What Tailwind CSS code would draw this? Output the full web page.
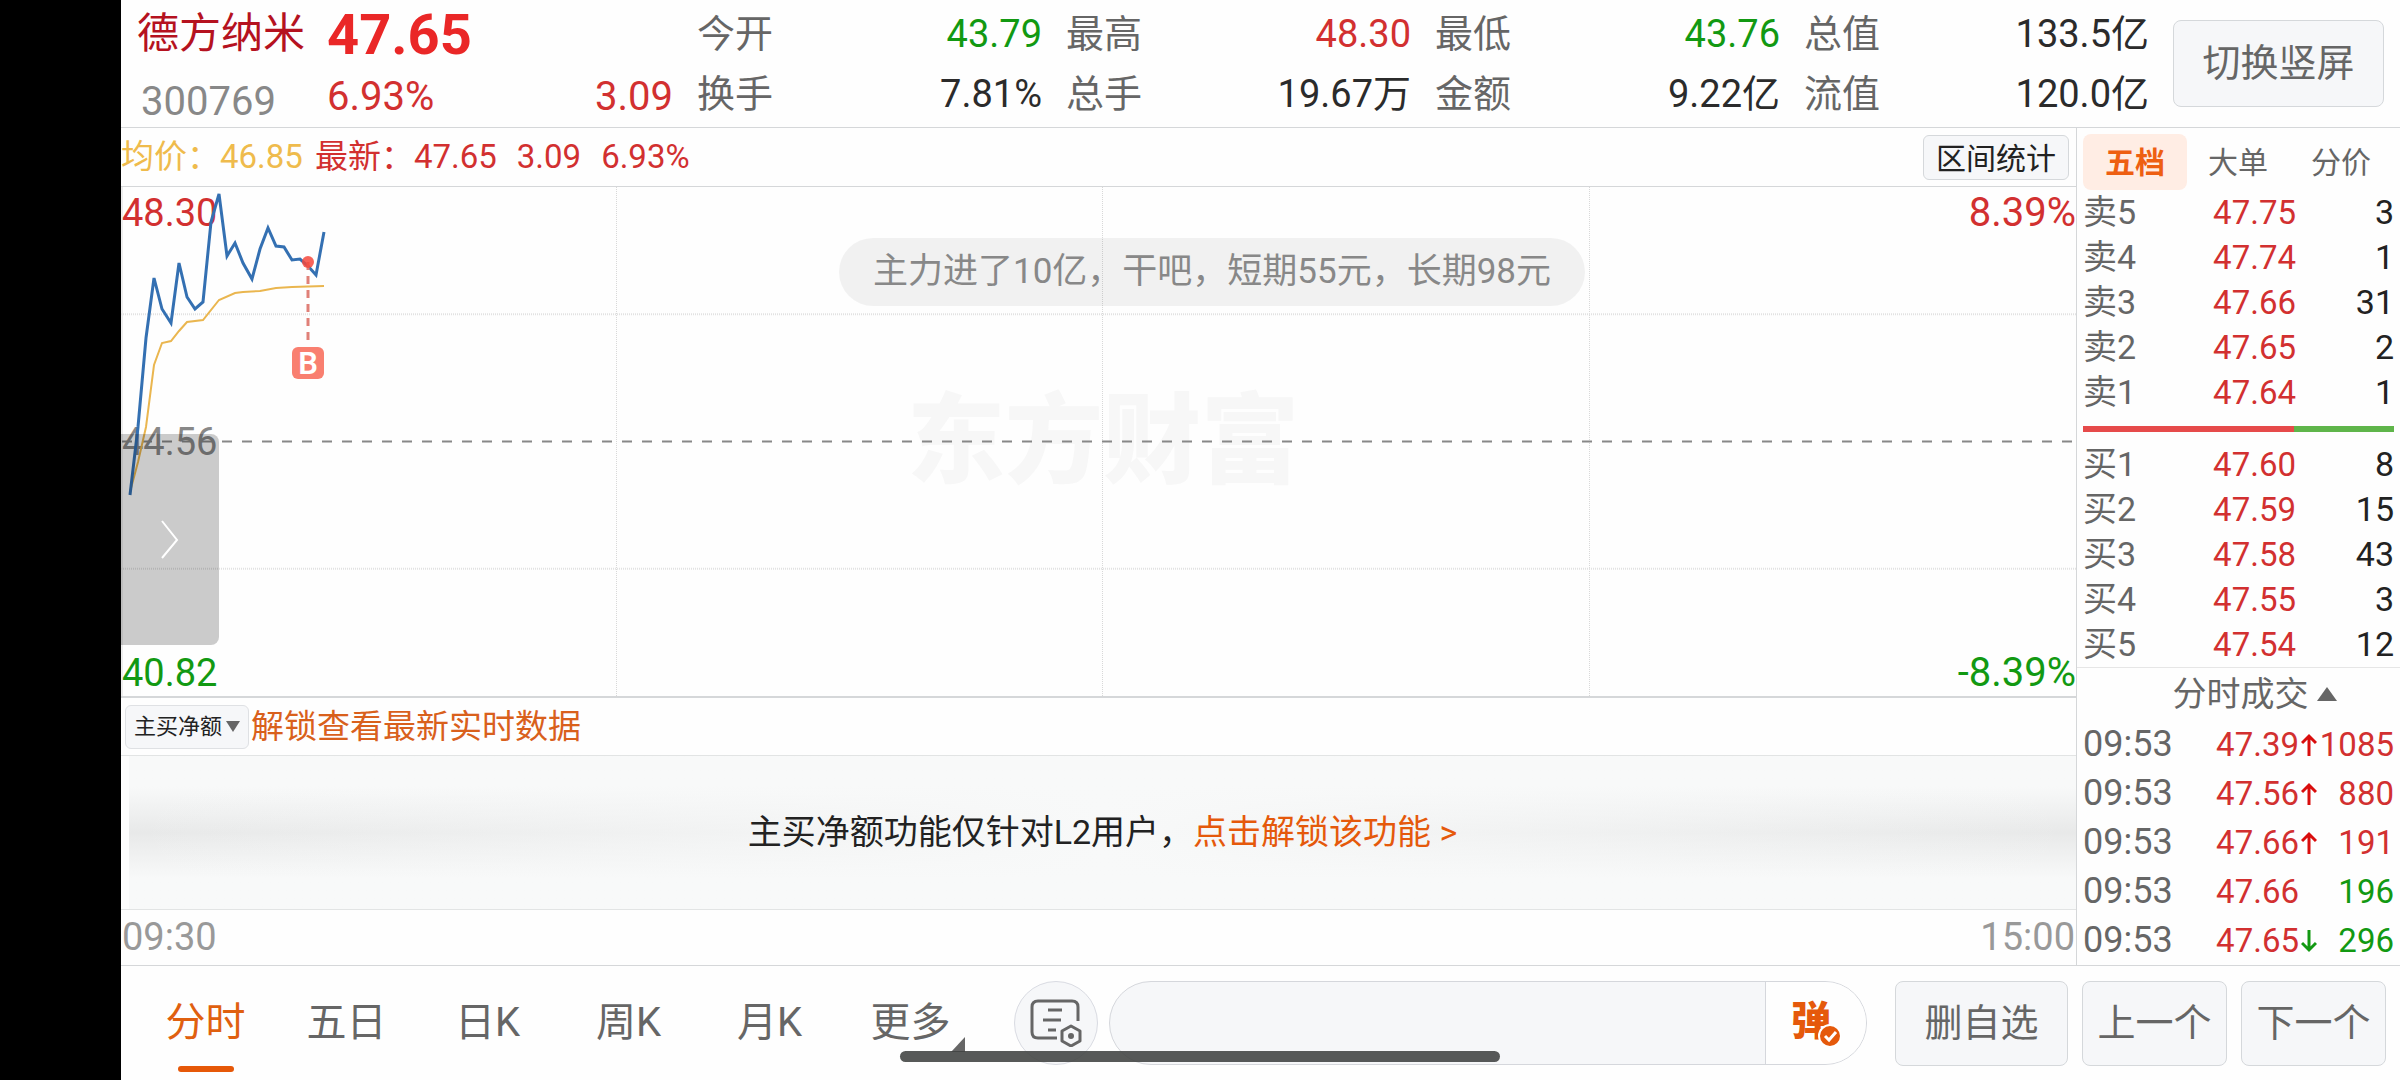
<!DOCTYPE html>
<html lang="zh-CN">
  <head>
    <meta charset="UTF-8" />
    <meta name="viewport" content="width=device-width, initial-scale=1.0" />
    <title>德方纳米 300769</title>
    <script src="https://cdn.jsdelivr.net/npm/@tailwindcss/browser@4"></script>
  </head>
  <body class="min-h-screen flex bg-black font-['Roboto','Noto_Sans_CJK_SC',sans-serif] text-[#666]">
    <div class="w-[121px] shrink-0"></div>

    <div class="relative flex-1 min-w-0 flex flex-col bg-[#fefefe]">

      <!-- Quote header -->
      <header class="flex h-32 border-b border-[#d5d7d9] pr-4">
        <div class="w-[206px] shrink-0 pl-4 pt-1">
          <h1 class="text-[42px] leading-[60px] text-[#b5121f] whitespace-nowrap">德方纳米</h1>
          <p class="text-[40px] leading-[76px] pl-1 text-[#888]">300769</p>
        </div>
        <div class="w-[346px] shrink-0">
          <p class="text-[56px] leading-[70px] font-bold text-[#ea2727]">47.65</p>
          <p class="flex justify-between text-[40px] leading-[54px] text-[#d23030]"><span>6.93%</span><span>3.09</span></p>
        </div>
        <dl class="flex-1 grid grid-cols-4 gap-x-6 content-start pl-6 pr-6 text-[38px] leading-[60px] pt-1 text-[#2b2b2b]">
          <div class="flex justify-between"><dt class="text-[#666]">今开</dt><dd class="text-[#129912]">43.79</dd></div>
          <div class="flex justify-between"><dt class="text-[#666]">最高</dt><dd class="text-[#d23030]">48.30</dd></div>
          <div class="flex justify-between"><dt class="text-[#666]">最低</dt><dd class="text-[#129912]">43.76</dd></div>
          <div class="flex justify-between"><dt class="text-[#666]">总值</dt><dd>133.5亿</dd></div>
          <div class="flex justify-between"><dt class="text-[#666]">换手</dt><dd>7.81%</dd></div>
          <div class="flex justify-between"><dt class="text-[#666]">总手</dt><dd>19.67万</dd></div>
          <div class="flex justify-between"><dt class="text-[#666]">金额</dt><dd>9.22亿</dd></div>
          <div class="flex justify-between"><dt class="text-[#666]">流值</dt><dd>120.0亿</dd></div>
        </dl>
        <button class="mt-5 h-[87px] w-[211px] shrink-0 rounded-lg border border-[#d5d8db] bg-[#f6f7f9] text-[38px]">切换竖屏</button>
      </header>

      <div class="flex-1 flex">
        <!-- Chart column -->
        <main class="flex-1 min-w-0 flex flex-col">
          <div class="flex items-center h-[59px] border-b border-[#d5d7d9] pr-[7px] text-[33px] text-[#d23030] whitespace-nowrap">
            <span class="text-[#efbb4c]">均价：46.85</span>
            <span class="ml-3">最新：47.65</span>
            <span class="ml-5">3.09</span>
            <span class="ml-5">6.93%</span>
            <button class="ml-auto h-[45px] w-[146px] rounded-md border border-[#d5d8db] bg-[#f6f7f9] text-[30px] text-[#222]">区间统计</button>
          </div>

          <!-- Intraday chart -->
          <div class="relative flex-1 min-h-[500px] border-b-2 border-[#d5d7d9] overflow-hidden">
            <p class="absolute left-[786px] top-1/2 -translate-y-1/2 text-[98px] leading-none font-black text-[#f7f7f7]">东方财富</p>
            <div class="absolute inset-y-0 left-[9px] right-0 grid grid-cols-4">
              <div class="border-r border-dotted border-[#d8d8d8]"></div>
              <div class="border-r border-dotted border-[#d8d8d8]"></div>
              <div class="border-r border-dotted border-[#d8d8d8]"></div>
            </div>
            <svg class="absolute inset-0 w-full h-full" fill="none">
              <line x1="1" y1="0" x2="1" y2="100%" stroke="#dcdcdc" />
              <line x1="0" y1="25%" x2="100%" y2="25%" stroke="#e2e2e2" stroke-width="2" stroke-dasharray="1 1" />
              <line x1="0" y1="75%" x2="100%" y2="75%" stroke="#e2e2e2" stroke-width="2" stroke-dasharray="1 1" />
              <line x1="1" y1="50%" x2="100%" y2="50%" stroke="#888" stroke-width="2" stroke-dasharray="10 10" />
            </svg>
            <span class="absolute left-px top-0 text-[38px] leading-[52px] text-[#d23030]">48.30</span>
            <span class="absolute left-px top-1/2 -translate-y-1/2 text-[38px] leading-[52px] text-[#888]">44.56</span>
            <span class="absolute left-px bottom-0 text-[38px] leading-[46px] text-[#129912]">40.82</span>
            <span class="absolute right-0 top-0 text-[40px] leading-[52px] text-[#d23030]">8.39%</span>
            <span class="absolute right-0 bottom-0 text-[40px] leading-[46px] text-[#129912]">-8.39%</span>
            <svg class="absolute left-0 top-0" width="260" height="400" viewBox="121 187 260 400" fill="none">
              <polyline stroke="#eab64f" stroke-width="2" points="130,492 138,462 146,427 154,365 162,343 171,341 179,331 187,322 203,320 219,300 235,293 243,292 260,291 276,288 292,287 324,286" />
              <polyline stroke="#3470b2" stroke-width="3" points="130,495 138,427 146,338 154,278 162,309 171,323 179,263 187,297 195,309 203,302 211,222 219,194 227,256 235,243 243,263 252,279 260,249 268,228 276,246 284,247 292,260 300,259 308,266 316,275 324,232" />
              <line x1="308" y1="262" x2="308" y2="340" stroke="#e08078" stroke-width="3" stroke-dasharray="8 6" />
              <circle cx="308" cy="262" r="6" fill="#f4483c" fill-opacity="0.85" />
              <rect x="292" y="347" width="32" height="32" rx="6" fill="#f97f70" />
              <text x="308" y="374" text-anchor="middle" font-size="31" font-weight="600" fill="#fff">B</text>
            </svg>
            <button aria-label="展开" class="absolute left-0 top-[247px] w-[98px] h-[211px] rounded-r-lg bg-black/20 flex items-center justify-center">
              <svg width="18" height="40" fill="none" stroke="#fff" stroke-width="2"><path d="M1 1 L16 20 L1 38" /></svg>
            </button>
            <p class="absolute left-[718px] top-[51px] h-[68px] px-[34px] rounded-full bg-black/5 text-[35px] leading-[68px] text-[#888] whitespace-nowrap">主力进了10亿，干吧，短期55元，长期98元</p>
          </div>

          <div class="flex items-center h-[58px] border-b border-[#e2e4e4] pl-1">
            <button class="flex items-center justify-between w-[124px] h-[44px] px-2 rounded-md border border-[#dfe1e4] bg-[#f6f7f9] text-[22px] text-[#222] whitespace-nowrap">主买净额
              <svg width="14" height="12"><path d="M0 0h14L7 11z" fill="#666" /></svg>
            </button>
            <a href="#" class="ml-0.5 text-[33px] text-[#d9601c]">解锁查看最新实时数据</a>
          </div>

          <div class="h-[154px] pl-2 border-b border-[#e2e4e4]">
            <p class="relative h-full flex items-center justify-center bg-linear-to-b from-[#f8f9f9] via-[#e8e9e9] to-[#f8f9f9] from-20% to-80% text-[34px] text-[#222]">
              <span class="absolute inset-0 bg-linear-to-r from-[#f8f9f9]/0 via-[#f8f9f9] to-[#f8f9f9]/0"></span>
              <span class="relative">主买净额功能仅针对L2用户，<a href="#" class="text-[#e5590b]">点击解锁该功能 &gt;</a></span>
            </p>
          </div>
          <div class="flex justify-between items-center h-[55px] px-px text-[38px] text-[#999]"><span>09:30</span><span>15:00</span></div>
        </main>

        <!-- Order book -->
        <aside class="w-[324px] shrink-0 border-l border-[#d5d7d9] text-[34px] text-[#222]">
          <div class="flex pt-1.5 pl-1.5 text-[30px] text-[#666]">
            <button class="w-[104px] h-14 rounded-lg bg-[#ffede4] font-bold text-[#ee5f12]">五档</button>
            <button class="w-[102px] h-14">大单</button>
            <button class="w-[104px] h-14">分价</button>
          </div>
          <table class="w-full table-fixed leading-[45px]">
            <tbody>
              <tr><td class="w-[78px] pl-1.5 text-[#666]">卖5</td><td class="w-[141px] text-right text-[33px] text-[#d23030]">47.75</td><td class="text-right pr-1.5">3</td></tr>
              <tr><td class="pl-1.5 text-[#666]">卖4</td><td class="text-right text-[33px] text-[#d23030]">47.74</td><td class="text-right pr-1.5">1</td></tr>
              <tr><td class="pl-1.5 text-[#666]">卖3</td><td class="text-right text-[33px] text-[#d23030]">47.66</td><td class="text-right pr-1.5">31</td></tr>
              <tr><td class="pl-1.5 text-[#666]">卖2</td><td class="text-right text-[33px] text-[#d23030]">47.65</td><td class="text-right pr-1.5">2</td></tr>
              <tr><td class="pl-1.5 text-[#666]">卖1</td><td class="text-right text-[33px] text-[#d23030]">47.64</td><td class="text-right pr-1.5">1</td></tr>
            </tbody>
          </table>
          <div class="mx-1.5 mt-[11px] mb-2.5 h-1.5 bg-linear-to-r from-[#e64a4a] from-68% to-[#5fb54a] to-68%"></div>
          <table class="w-full table-fixed leading-[45px]">
            <tbody>
              <tr><td class="w-[78px] pl-1.5 text-[#666]">买1</td><td class="w-[141px] text-right text-[33px] text-[#d23030]">47.60</td><td class="text-right pr-1.5">8</td></tr>
              <tr><td class="pl-1.5 text-[#666]">买2</td><td class="text-right text-[33px] text-[#d23030]">47.59</td><td class="text-right pr-1.5">15</td></tr>
              <tr><td class="pl-1.5 text-[#666]">买3</td><td class="text-right text-[33px] text-[#d23030]">47.58</td><td class="text-right pr-1.5">43</td></tr>
              <tr><td class="pl-1.5 text-[#666]">买4</td><td class="text-right text-[33px] text-[#d23030]">47.55</td><td class="text-right pr-1.5">3</td></tr>
              <tr><td class="pl-1.5 text-[#666]">买5</td><td class="text-right text-[33px] text-[#d23030]">47.54</td><td class="text-right pr-1.5">12</td></tr>
            </tbody>
          </table>
          <!-- Trades -->
          <button class="flex items-center justify-center gap-2 w-full h-[53px] pl-8 border-t border-[#e6e6e6] text-[#666]">分时成交
            <svg width="20" height="14"><path d="M10 0l10 14H0z" fill="#666" /></svg>
          </button>
          <table class="w-full table-fixed leading-[49px] text-[33px] text-[#d23030]">
            <tbody>
              <tr><td class="w-[102px] pl-1.5 text-[36px] text-[#666]">09:53</td><td class="w-[120px] text-right">47.39</td><td class="w-5"><svg class="mx-auto" width="16" height="24" fill="none" stroke="#d90d0d" stroke-width="3"><path d="M8 23V3M1 10l7-7 7 7" /></svg></td><td class="text-right pr-1.5">1085</td></tr>
              <tr><td class="pl-1.5 text-[36px] text-[#666]">09:53</td><td class="text-right">47.56</td><td><svg class="mx-auto" width="16" height="24" fill="none" stroke="#d90d0d" stroke-width="3"><path d="M8 23V3M1 10l7-7 7 7" /></svg></td><td class="text-right pr-1.5">880</td></tr>
              <tr><td class="pl-1.5 text-[36px] text-[#666]">09:53</td><td class="text-right">47.66</td><td><svg class="mx-auto" width="16" height="24" fill="none" stroke="#d90d0d" stroke-width="3"><path d="M8 23V3M1 10l7-7 7 7" /></svg></td><td class="text-right pr-1.5">191</td></tr>
              <tr><td class="pl-1.5 text-[36px] text-[#666]">09:53</td><td class="text-right">47.66</td><td></td><td class="text-right pr-1.5 text-[#129912]">196</td></tr>
              <tr><td class="pl-1.5 text-[36px] text-[#666]">09:53</td><td class="text-right">47.65</td><td><svg class="mx-auto" width="16" height="24" fill="none" stroke="#129912" stroke-width="3"><path d="M8 1v20M1 14l7 7 7-7" /></svg></td><td class="text-right pr-1.5 text-[#129912]">296</td></tr>
            </tbody>
          </table>
        </aside>
      </div>

      <!-- Bottom bar -->
      <footer class="flex items-start h-[115px] border-t border-[#d5d7d9] pt-[15px] pr-3.5 text-[38px]">
        <nav class="flex shrink-0 pl-3.5 text-[40px] leading-[84px]">
          <button class="relative w-[141px] text-[#e0600f]">分时<span class="absolute left-[43px] top-[85px] w-14 h-1.5 rounded-full bg-[#e65808]"></span></button>
          <button class="w-[141px]">五日</button>
          <button class="w-[141px]">日K</button>
          <button class="w-[141px]">周K</button>
          <button class="w-[141px]">月K</button>
          <button class="relative w-[141px]">更多<svg class="absolute right-4 top-14" width="14" height="15"><path d="M14 0v15H0z" fill="#666" /></svg></button>
        </nav>
        <button aria-label="笔记" class="ml-[33px] w-[84px] h-[84px] shrink-0 rounded-full border border-[#d9dbe2] bg-[#f6f7f9] flex items-center justify-center">
          <svg width="52" height="48" fill="none" stroke="#666" stroke-width="3" stroke-linecap="round">
            <path d="M27 39H8q-6 0-6-6V8q0-6 6-6h34q6 0 6 6v14M18 11h14M13 21h18M18 31h8" stroke-linecap="butt" />
            <path d="M41 27l9 5v10l-9 5-9-5V32z" stroke-width="3" stroke-linejoin="round" />
            <circle cx="41" cy="37" r="3" fill="#666" stroke="none" />
          </svg>
        </button>
        <div class="ml-[11px] flex flex-1 min-w-0 h-[84px] rounded-full border border-[#d5d7dc] bg-[#f6f7f9] overflow-hidden">
          <input type="text" aria-label="弹幕" class="flex-1 min-w-0 px-9 outline-none" />
          <button aria-label="弹幕开关" class="w-[101px] border-l border-[#d5d7dc] bg-[#fefefe] flex items-center justify-center">
            <svg width="50" height="48">
              <text x="0" y="36" font-size="40" font-weight="900" fill="#e5590b">弹</text>
              <circle cx="39" cy="37" r="11" fill="#e5590b" stroke="#fff" stroke-width="2" />
              <path d="M34 37l4 4 7-8" fill="none" stroke="#fff" stroke-width="3" />
            </svg>
          </button>
        </div>
        <button class="ml-7 w-[173px] h-[85px] shrink-0 rounded-lg border border-[#d5d8db] bg-[#f6f7f9]">删自选</button>
        <button class="ml-3.5 w-[145px] h-[85px] shrink-0 rounded-lg border border-[#d5d8db] bg-[#f6f7f9]">上一个</button>
        <button class="ml-3.5 w-[145px] h-[85px] shrink-0 rounded-lg border border-[#d5d8db] bg-[#f6f7f9]">下一个</button>
      </footer>

      <!-- System home indicator -->
      <div class="absolute left-[779px] bottom-[18px] w-[600px] h-[11px] rounded-full bg-[#404241]/88"></div>
    </div>
  </body>
</html>
